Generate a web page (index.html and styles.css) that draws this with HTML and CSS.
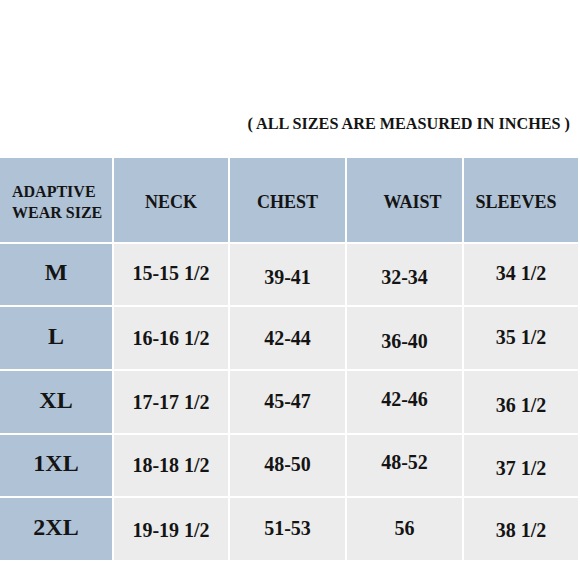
FILE: index.html
```html
<!DOCTYPE html>
<html>
<head>
<meta charset="utf-8">
<link rel="stylesheet" href="styles.css">
</head>
<body>
<div class="page">
  <div class="note"><span>( ALL SIZES ARE MEASURED IN INCHES )</span></div>
  <div class="chart">
    <div class="cell head first"><span>ADAPTIVE<br>WEAR SIZE</span></div>
    <div class="cell head">NECK</div>
    <div class="cell head">CHEST</div>
    <div class="cell head waist">WAIST</div>
    <div class="cell head sleeves">SLEEVES</div>

    <div class="cell size">M</div>
    <div class="cell val up1">15-15 1/2</div>
    <div class="cell val dn3">39-41</div>
    <div class="cell val dn3">32-34</div>
    <div class="cell val up1">34 1/2</div>

    <div class="cell size">L</div>
    <div class="cell val">16-16 1/2</div>
    <div class="cell val">42-44</div>
    <div class="cell val dn3">36-40</div>
    <div class="cell val up1">35 1/2</div>

    <div class="cell size">XL</div>
    <div class="cell val">17-17 1/2</div>
    <div class="cell val up1">45-47</div>
    <div class="cell val up3">42-46</div>
    <div class="cell val dn3">36 1/2</div>

    <div class="cell size">1XL</div>
    <div class="cell val">18-18 1/2</div>
    <div class="cell val up1">48-50</div>
    <div class="cell val up3">48-52</div>
    <div class="cell val dn3">37 1/2</div>

    <div class="cell size">2XL</div>
    <div class="cell val dn1">19-19 1/2</div>
    <div class="cell val up1">51-53</div>
    <div class="cell val up1">56</div>
    <div class="cell val dn1">38 1/2</div>
  </div>
</div>
</body>
</html>
```

FILE: styles.css
```css
html, body {
  margin: 0;
  padding: 0;
  background: #ffffff;
}

body {
  font-family: "Liberation Serif", "Times New Roman", serif;
  font-weight: bold;
  color: #141414;
}

.page {
  width: 580px;
  height: 580px;
}

.note {
  height: 158px;
  box-sizing: border-box;
  display: flex;
  justify-content: flex-end;
  align-items: flex-end;
  padding-right: 10px;
  padding-bottom: 25px;
  font-size: 16.2px;
  line-height: 17px;
}

.chart {
  display: grid;
  width: 578px;
  grid-template-columns: 112px 114px 115px 115px 114px;
  grid-template-rows: 84px 61px 62px 62px 61px 62px;
  gap: 2px;
}

.cell {
  display: flex;
  align-items: center;
  justify-content: center;
  background: #ececec;
  font-size: 20px;
}

.head {
  background: #b0c2d6;
  font-size: 18px;
  padding-top: 4px;
  box-sizing: border-box;
}

.head.first {
  justify-content: flex-start;
  padding-left: 12px;
  font-size: 16px;
  line-height: 21px;
  padding-top: 4px;
}

.head.waist {
  padding-left: 16px;
}

.head.sleeves {
  padding-right: 10px;
}

.size {
  background: #b0c2d6;
  font-size: 24px;
  padding-bottom: 4px;
  box-sizing: border-box;
}

.val {
  box-sizing: border-box;
}

.up1 { padding-bottom: 2px; }
.up3 { padding-bottom: 6px; }
.dn1 { padding-top: 2px; }
.dn3 { padding-top: 6px; }
```
